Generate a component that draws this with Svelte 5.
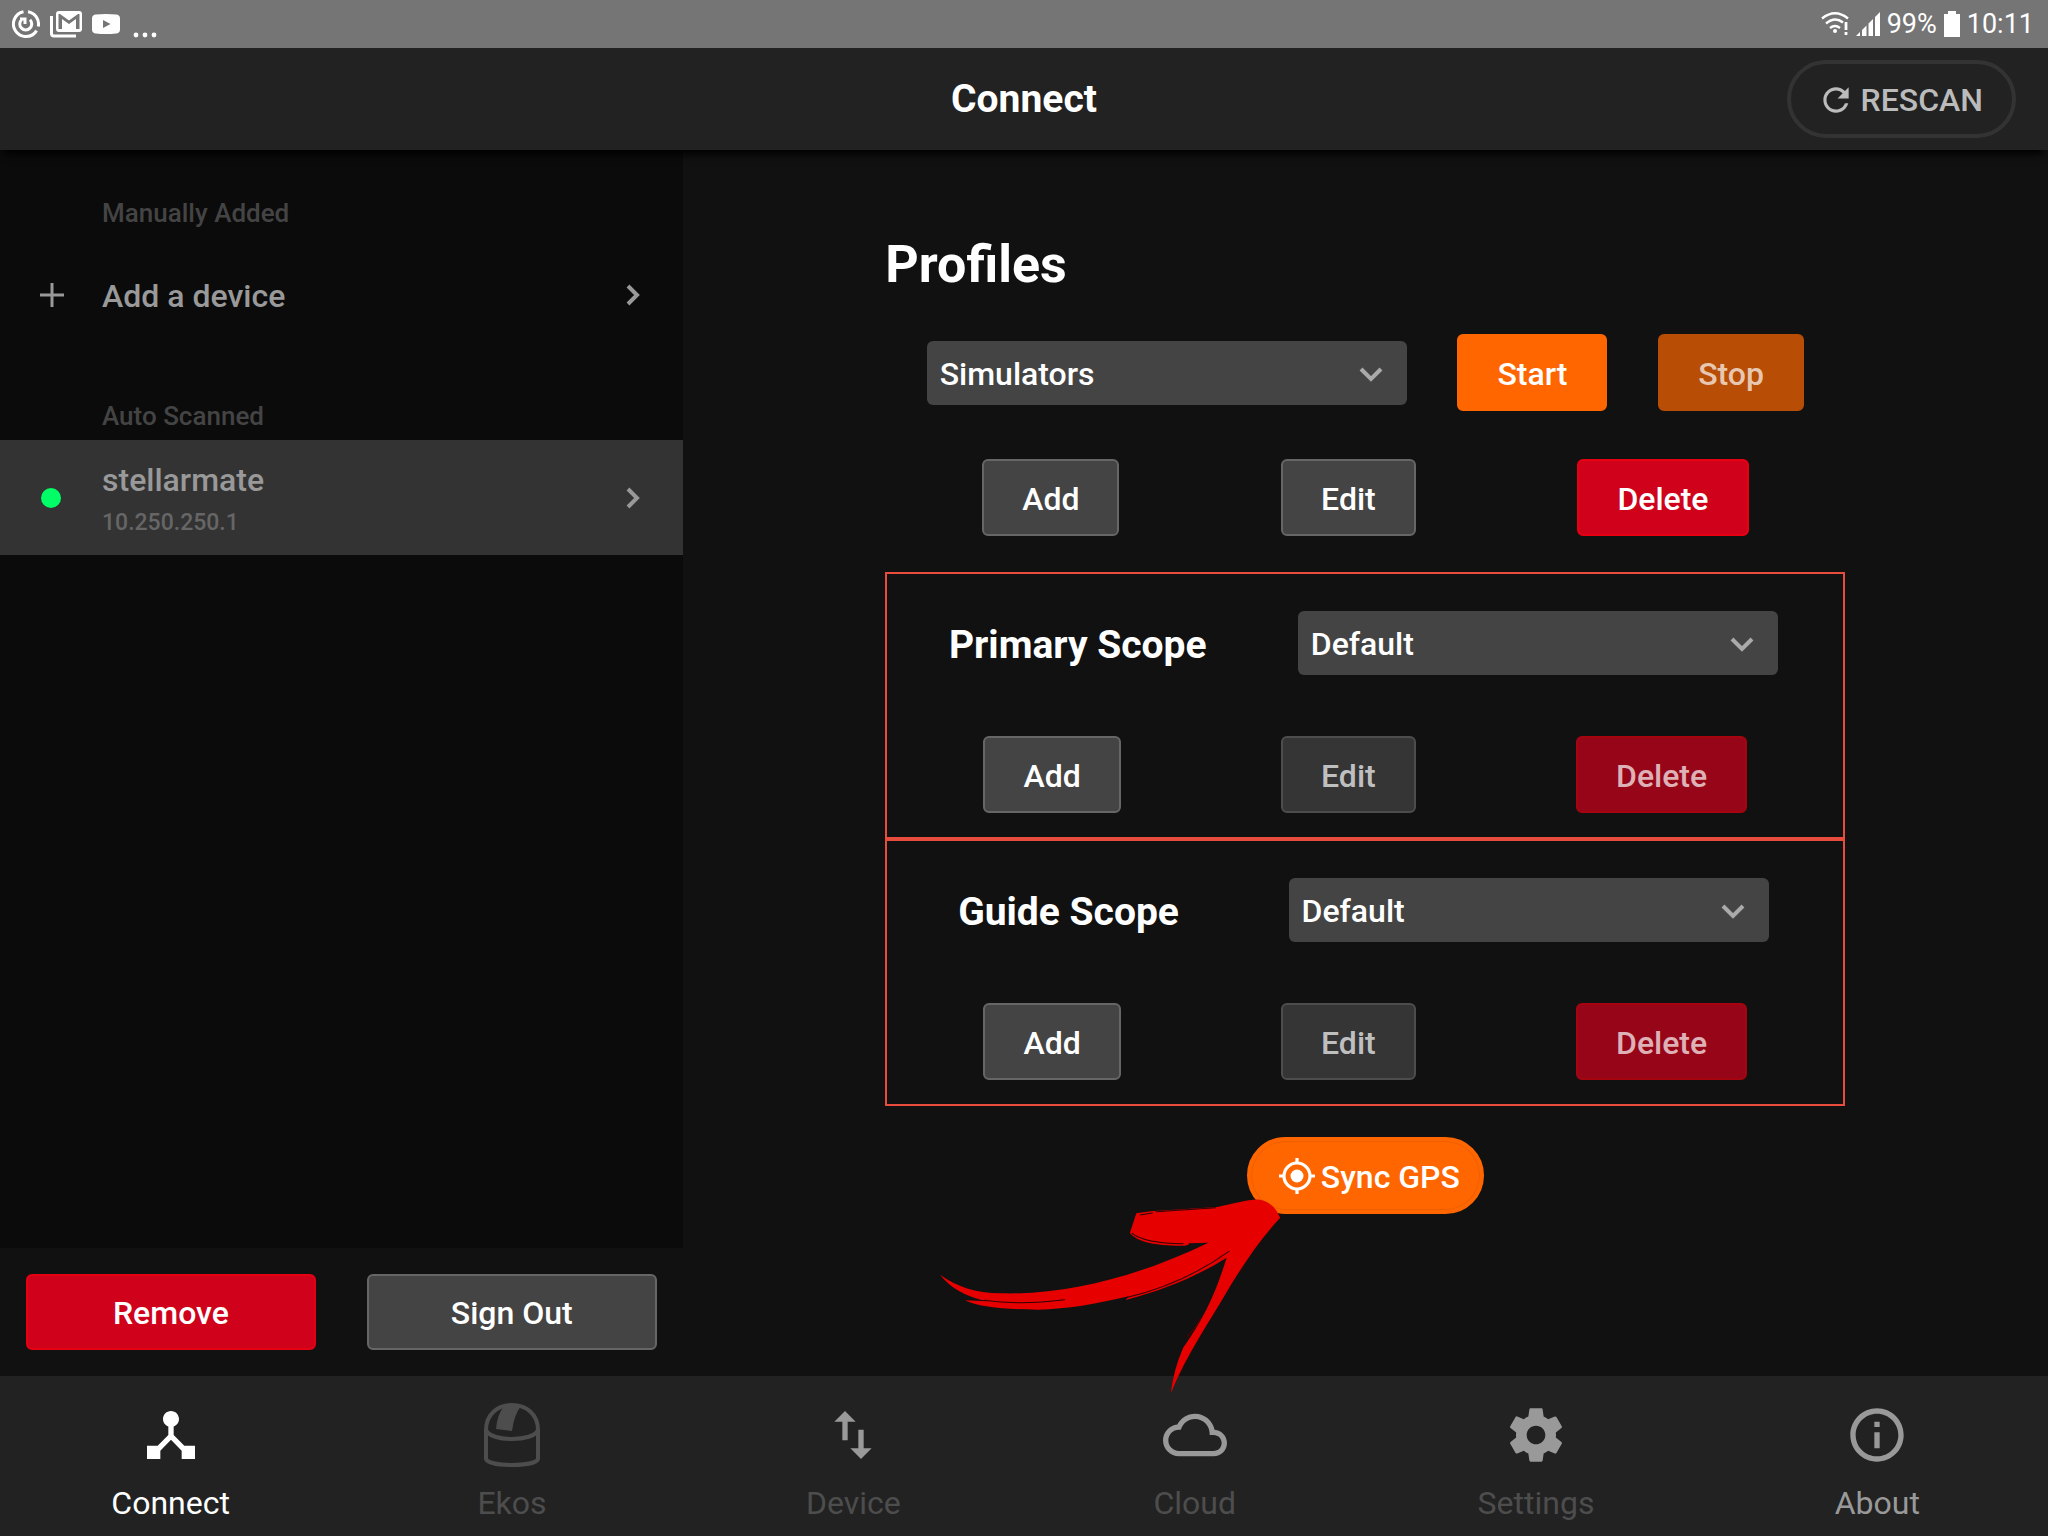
<script>
  const scopes = [
    { id: 'primary', title: 'Primary Scope' },
    { id: 'guide', title: 'Guide Scope' }
  ];
  const tabs = [
    { label: 'Connect', state: 'active', d: 'M17 16l-4-4V8.82C14.16 8.4 15 7.3 15 6c0-1.66-1.34-3-3-3S9 4.34 9 6c0 1.3.84 2.4 2 2.82V12l-4 4H3v5h5v-3.05l4-4.2 4 4.2V21h5v-5h-4z' },
    { label: 'Ekos', state: 'off', d: '' },
    { label: 'Device', state: 'off', d: 'M9 3L5 6.99h3V14h2V6.99h3L9 3zm7 14.01V10h-2v7.01h-3L15 21l4-3.99h-3z' },
    { label: 'Cloud', state: 'off', d: 'M19.35 10.04C18.67 6.59 15.64 4 12 4 9.11 4 6.6 5.64 5.35 8.04 2.34 8.36 0 10.91 0 14c0 3.31 2.69 6 6 6h13c2.76 0 5-2.24 5-5 0-2.64-2.05-4.78-4.65-4.96zM19 18H6c-2.21 0-4-1.79-4-4s1.79-4 4-4h.71C7.37 7.69 9.48 6 12 6c3.04 0 5.5 2.46 5.5 5.5v.5H19c1.66 0 3 1.34 3 3s-1.34 3-3 3z' },
    { label: 'Settings', state: 'off', d: 'M19.43 12.98c.04-.32.07-.64.07-.98s-.03-.66-.07-.98l2.11-1.65c.19-.15.24-.42.12-.64l-2-3.46c-.12-.22-.39-.3-.61-.22l-2.49 1c-.52-.4-1.08-.73-1.69-.98l-.38-2.65C14.46 2.18 14.25 2 14 2h-4c-.25 0-.46.18-.49.42l-.38 2.65c-.61.25-1.17.59-1.69.98l-2.49-1c-.23-.09-.49 0-.61.22l-2 3.46c-.13.22-.07.49.12.64l2.11 1.65c-.04.32-.07.65-.07.98s.03.66.07.98l-2.11 1.65c-.19.15-.24.42-.12.64l2 3.46c.12.22.39.3.61.22l2.49-1c.52.4 1.08.73 1.69.98l.38 2.65c.03.24.24.42.49.42h4c.25 0 .46-.18.49-.42l.38-2.65c.61-.25 1.17-.59 1.69-.98l2.49 1c.23.09.49 0 .61-.22l2-3.46c.12-.22.07-.49-.12-.64l-2.11-1.65zM12 15.5c-1.93 0-3.5-1.57-3.5-3.5s1.57-3.5 3.5-3.5 3.5 1.57 3.5 3.5-1.57 3.5-3.5 3.5z' },
    { label: 'About', state: '', d: 'M11 17h2v-6h-2v6zm1-15C6.48 2 2 6.48 2 12s4.48 10 10 10 10-4.48 10-10S17.52 2 12 2zm0 18c-4.41 0-8-3.59-8-8s3.59-8 8-8 8 3.59 8 8-3.59 8-8 8zM11 9h2V7h-2v2z' }
  ];
</script>

{#snippet dropdown(id, label, value)}
  <div class="select">
    <select {id} aria-label={label}>
      <option>{value}</option>
    </select>
    <svg viewBox="0 0 24 16" aria-hidden="true"><path d="M2 2l10 10L22 2" /></svg>
  </div>
{/snippet}

{#snippet chevron()}
  <svg class="chevron" viewBox="0 0 14 22" aria-hidden="true"><path d="M2 2l9 9-9 9" /></svg>
{/snippet}

<div class="app">
  <div class="status">
    <div class="notices">
      <svg width="28" height="28" viewBox="0 0 28 28" fill="none" stroke="#fff" stroke-width="3">
        <path d="M11.500 1.800A12.500 12.500 0 1 0 24.600 20.600M26.300 16.500A12.500 12.500 0 0 0 16 1.800" />
        <path d="M9.500 9.700A6 6 0 1 0 18 9.700M8 9h5v5" />
      </svg>
      <svg width="32" height="28" viewBox="0 0 32 28">
        <path d="M1.500 6v17.500q0 2.500 2.500 2.500h22" fill="none" stroke="#fff" stroke-width="3" />
        <path fill="#fff" fill-rule="evenodd" d="M9 1h20q3 0 3 3v15q0 3-3 3H9q-3 0-3-3V4q0-3 3-3zM8.500 4v15H12V9l7 5 7-5v10h3.500V4H28l-9 6.500L10 4z" />
      </svg>
      <svg width="28" height="20" viewBox="0 0 28 20"><path fill="#fff" fill-rule="evenodd" d="M4 .5Q14-.5 24 .5q4 .3 4 4v11q0 3.700-4 4-10 1-20 0-4-.3-4-4v-11q0-3.700 4-4zM11 6v8l7.500-4z" /></svg>
      <svg class="dots" width="28" height="6" viewBox="0 0 28 6" fill="#fff"><circle cx="6" cy="3" r="2.400" /><circle cx="15" cy="3" r="2.400" /><circle cx="24" cy="3" r="2.400" /></svg>
    </div>
    <div class="system">
      <svg width="28" height="24" viewBox="0 0 28 24" fill="none" stroke="#fff" stroke-width="2.400">
        <path d="M1 6.500Q14-4 27 6.500M5 11.500q9-7.500 17-1M9 16q5-4 10 0" />
        <circle cx="14" cy="19" r="2" fill="#fff" stroke="none" /><path d="M25 10v8M25 20v3" stroke-width="2.800" />
      </svg>
      <svg width="24" height="24" viewBox="0 0 24 24" fill="#fff"><path d="M0 24l4-4v4zM6 24v-6l4.500-4.500V24zM12.500 24V11.500L17 7v17zM19 24V5l5-5v24z" /></svg>
      <span>99%</span>
      <svg width="16" height="26" viewBox="0 0 16 26" fill="#fff"><path d="M4 0h8v3h4v23H0V3h4z" /></svg>
      <span>10:11</span>
    </div>
  </div>

  <header>
    <h1>Connect</h1>
    <button class="rescan">
      <svg viewBox="0 0 24 24" aria-hidden="true"><path d="M17.650 6.350C16.200 4.900 14.210 4 12 4c-4.420 0-7.990 3.580-7.990 8s3.570 8 7.990 8c3.730 0 6.840-2.550 7.730-6h-2.080c-.82 2.330-3.040 4-5.650 4-3.310 0-6-2.690-6-6s2.690-6 6-6c1.660 0 3.140.69 4.220 1.780L13 11h7V4l-2.350 2.350z" /></svg>
      RESCAN
    </button>
  </header>

  <div class="body">
    <aside>
      <div class="devices">
        <h3>Manually Added</h3>
        <button class="device">
          <svg class="plus" viewBox="0 0 24 24" aria-hidden="true"><path d="M12 0v24M0 12h24" /></svg>
          <span class="name">Add a device</span>
          {@render chevron()}
        </button>
        <h3>Auto Scanned</h3>
        <button class="device selected">
          <span class="dot"></span>
          <span class="name">stellarmate<small>10.250.250.1</small></span>
          {@render chevron()}
        </button>
      </div>
      <div class="account">
        <button class="btn red">Remove</button>
        <button class="btn">Sign Out</button>
      </div>
    </aside>

    <main>
      <div class="panel">
        <h2>Profiles</h2>
        <div class="row">
          {@render dropdown('profile', 'Profile', 'Simulators')}
          <button class="btn orange">Start</button>
          <button class="btn orange" disabled>Stop</button>
        </div>
        <div class="row actions">
          <button class="btn">Add</button>
          <button class="btn">Edit</button>
          <button class="btn red">Delete</button>
        </div>
        <div class="scopes">
          {#each scopes as scope}
            <section>
              <div class="row head">
                <label for={scope.id}>{scope.title}</label>
                {@render dropdown(scope.id, scope.title, 'Default')}
              </div>
              <div class="row">
                <button class="btn">Add</button>
                <button class="btn" disabled>Edit</button>
                <button class="btn red" disabled>Delete</button>
              </div>
            </section>
          {/each}
        </div>
        <div class="sync">
          <button class="gps">
            <svg viewBox="0 0 36 36" aria-hidden="true">
              <circle cx="18" cy="18" r="6.500" fill="#fff" />
              <circle cx="18" cy="18" r="13" fill="none" stroke="#fff" stroke-width="3.200" />
              <path d="M18 0v5M18 31v5M0 18h5M31 18h5" stroke="#fff" stroke-width="3.200" />
            </svg>
            <span>Sync GPS</span>
          </button>
          <svg class="arrow" viewBox="0 0 1568 900" preserveAspectRatio="none" aria-hidden="true">
            <path fill="#e60000" d="M55 494C100 530 145 549 215 550C400 556 590 490 756 398L705 400Q708 404 695 407C620 408 573 398 551 369L568 310L605 304L780 291C830 280 860 267 890 269Q926 276 944 323C890 390 850 460 815 525C760 635 700 730 658 850Q665 780 690 714C745 625 775 550 804 443C725 500 640 540 540 570L548 559C460 583 390 597 310 599C240 598 160 594 120 571L180 574C120 560 80 532 55 494z" />
            <path fill="none" stroke="#300000" stroke-width="3" stroke-linecap="round" d="M170 571C240 582 320 578 380 569M545 562C640 536 730 490 810 424M557 370Q590 400 690 401M578 315L610 309M620 305L775 293" />
            <path fill="none" stroke="#550000" stroke-width="3" stroke-linecap="round" d="M735 627Q725 650 702 680" />
          </svg>
        </div>
      </div>
    </main>
  </div>

  <nav>
    {#each tabs as tab}
      <a href="#{tab.label.toLowerCase()}" class={tab.state}>
        {#if tab.d}
          <svg viewBox="0 0 24 24" aria-hidden="true"><path d={tab.d} /></svg>
        {:else}
          <svg viewBox="0 0 64 64" aria-hidden="true">
            <g fill="none" stroke="currentColor" stroke-width="4">
              <path d="M6 27C6 11 18 2 32 2s26 9 26 25v29C55 64 9 64 6 56zM6 27c4 12 48 12 52 0" />
            </g>
            <path fill="currentColor" d="M24 3h17q-7 9-9 25l-16-2q1-14 8-23z" />
          </svg>
        {/if}
        <span>{tab.label}</span>
      </a>
    {/each}
  </nav>
</div>

<style>
  :global(body) {
    margin: 0;
    background: #111;
  }
  .app {
    min-height: 100vh;
    display: flex;
    flex-direction: column;
    background: #111;
    color: #fff;
    font: 500 32px/40px Roboto, sans-serif;
  }
  .app * {
    box-sizing: border-box;
  }
  h1, h2, h3 {
    margin: 0;
  }
  button, select {
    font: inherit;
    color: inherit;
    cursor: pointer;
  }
  svg {
    flex: none;
    display: block;
  }
  .status {
    height: 48px;
    padding: 0 14px 0 12px;
    display: flex;
    align-items: center;
    justify-content: space-between;
    background: #757575;
    font-size: 27px;
    font-weight: 400;
  }
  .notices, .system {
    display: flex;
    align-items: center;
    gap: 10px;
  }
  .system {
    gap: 7px;
  }
  .notices .dots {
    align-self: flex-end;
  }
  header {
    position: relative;
    z-index: 1;
    display: grid;
    grid-template-columns: 1fr auto 1fr;
    align-items: center;
    padding: 12px 32px;
    background: #222;
    box-shadow: 0 8px 8px -4px #000;
  }
  h1 {
    grid-column: 2;
    font-size: 39px;
    line-height: 48px;
    font-weight: 700;
  }
  .rescan {
    justify-self: end;
    display: flex;
    align-items: center;
    gap: 6px;
    height: 78px;
    padding: 2px 29px 0 26px;
    border: 4px solid #333;
    border-radius: 39px;
    background: none;
    color: #bbb;
  }
  .rescan svg {
    width: 38px;
    height: 38px;
    fill: #bbb;
  }
  .body {
    flex: 1;
    display: grid;
    grid-template-columns: 1fr 2fr;
  }
  aside {
    display: flex;
    flex-direction: column;
  }
  .devices {
    flex: 1;
    padding-top: 47px;
    background: #0b0b0b;
  }
  h3 {
    padding-left: 102px;
    margin-bottom: 8px;
    font-size: 26px;
    line-height: 32px;
    font-weight: 500;
    color: #444;
  }
  .device {
    width: 100%;
    height: 115px;
    margin-bottom: 48px;
    padding: 0 43px 0 40px;
    display: grid;
    grid-template-columns: 62px 1fr auto;
    align-items: center;
    border: 0;
    background: none;
    text-align: left;
    color: #999;
  }
  .selected {
    background: #333;
  }
  .name {
    padding-top: 3px;
  }
  small {
    display: block;
    margin-top: 7px;
    font-size: 23px;
    line-height: 32px;
    color: #666;
  }
  .plus {
    width: 24px;
    height: 24px;
    stroke: #999;
    stroke-width: 3;
  }
  .dot {
    width: 20px;
    height: 20px;
    margin-left: 1px;
    border-radius: 50%;
    background: #00ff66;
  }
  .chevron {
    width: 14px;
    height: 22px;
    fill: none;
    stroke: #999;
    stroke-width: 4;
  }
  .account {
    display: grid;
    grid-template-columns: 1fr 1fr;
    gap: 51px;
    padding: 26px;
  }
  .btn {
    height: 77px;
    padding: 2px 38px 0;
    border: 2px solid #666;
    border-radius: 6px;
    background: #444;
  }
  .account .btn {
    height: 76px;
  }
  .red {
    border-color: #e60012;
    background: #d0021b;
  }
  .orange {
    border-color: #f60;
    background: #f60;
  }
  .btn:disabled {
    border-color: #4d4d4d;
    background: #353535;
    color: rgba(255, 255, 255, 0.7);
  }
  .red:disabled {
    border-color: #a60510;
    background: #970618;
  }
  .orange:disabled {
    border-color: #b84d05;
    background: #b84d05;
  }
  main {
    display: flex;
    justify-content: center;
  }
  .panel {
    width: 100%;
    max-width: 960px;
    padding: 83px 0 32px;
  }
  h2 {
    margin-bottom: 37px;
    font-size: 52px;
    line-height: 64px;
    font-weight: 700;
  }
  .row {
    display: flex;
    align-items: center;
    justify-content: space-around;
    padding: 0 16px;
  }
  .actions {
    margin: 48px 0 36px;
  }
  .select {
    position: relative;
    width: 480px;
  }
  select {
    appearance: none;
    display: block;
    width: 100%;
    height: 64px;
    padding: 2px 60px 0 13px;
    border: 0;
    border-radius: 6px;
    background: #444;
  }
  .select svg {
    position: absolute;
    right: 24px;
    top: 26px;
    width: 24px;
    height: 16px;
    fill: none;
    stroke: #aaa;
    stroke-width: 4;
    pointer-events: none;
  }
  section {
    padding: 37px 0 24px;
    border: 2px solid #e74c3c;
  }
  .head {
    margin-bottom: 61px;
    padding-right: 20px;
  }
  label {
    padding-top: 4px;
    font-size: 39px;
    line-height: 48px;
    font-weight: 700;
  }
  .sync {
    position: relative;
    width: max-content;
    margin: 31px auto 0;
  }
  .gps {
    display: flex;
    align-items: center;
    gap: 6px;
    height: 77px;
    padding: 0 20px 0 28px;
    border: 4px solid #f60;
    border-radius: 39px;
    background: #f60;
    box-shadow: inset 0 0 0 1px #ee5f00;
  }
  .gps span {
    padding-top: 2px;
  }
  .gps svg {
    width: 36px;
    height: 36px;
  }
  .arrow {
    position: absolute;
    z-index: 2;
    top: -27px;
    left: -328px;
    width: 600px;
    height: 300px;
    pointer-events: none;
  }
  nav {
    display: grid;
    grid-template-columns: repeat(6, 1fr);
    background: #222;
  }
  nav a {
    display: flex;
    flex-direction: column;
    align-items: center;
    gap: 16px;
    padding: 27px 0 13px;
    color: #999;
    font-weight: 400;
    text-decoration: none;
  }
  nav svg {
    width: 64px;
    height: 64px;
    fill: #999;
  }
  nav .active {
    color: #fff;
  }
  nav .active svg {
    fill: #fff;
  }
  nav .off {
    color: #4d4d4d;
  }
</style>
